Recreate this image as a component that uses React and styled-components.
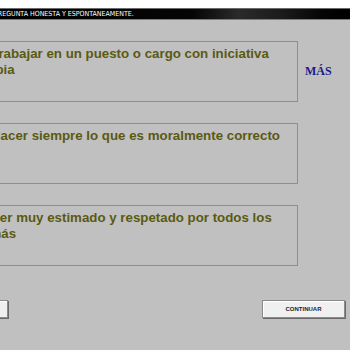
import React from "react";
import styled, { createGlobalStyle } from "styled-components";

const Global = createGlobalStyle`
  html, body {
    margin: 0;
    padding: 0;
    background: #c0c0c0;
    overflow: hidden;
  }
`;

const opciones = [
  { texto: "Trabajar en un puesto o cargo con iniciativa propia", mas: true },
  { texto: "Hacer siempre lo que es moralmente correcto" },
  { texto: "Ser muy estimado y respetado por todos los demás" },
];

export default function App() {
  return (
    <>
      <Global />
      <Pagina>
        <FranjaBlanca />
        <BarraTitulo>
          <Titulo>PREGUNTA HONESTA Y ESPONTANEAMENTE.</Titulo>
        </BarraTitulo>
        <Lista>
          {opciones.map((op) => (
            <Fila key={op.texto}>
              <Caja>
                <Texto>{op.texto}</Texto>
              </Caja>
              {op.mas && <Mas>MÁS</Mas>}
            </Fila>
          ))}
        </Lista>
        <Botonera>
          <Boton className="izq" />
          <Boton>CONTINUAR</Boton>
        </Botonera>
      </Pagina>
    </>
  );
}

const Pagina = styled.div`
  width: 350px;
  height: 350px;
  background: #c0c0c0;
  overflow: hidden;
  display: flex;
  flex-direction: column;
`;
const FranjaBlanca = styled.div`
  height: 8px;
  background: #ffffff;
`;
const BarraTitulo = styled.div`
  height: 10px;
  border-top: 1px solid #6a6a6a;
  border-bottom: 1px solid #7a7a7a;
  background: linear-gradient(
    90deg,
    #000 0%,
    #050505 55%,
    #2a2a2a 68%,
    #1c1c1c 80%,
    #050505 92%,
    #000 100%
  );
  display: flex;
  align-items: center;
  overflow: hidden;
`;
const Titulo = styled.span`
  margin-left: -6px;
  white-space: nowrap;
  color: #ffffff;
  font-family: "DejaVu Sans Condensed", "DejaVu Sans", sans-serif;
  font-size: 7px;
  line-height: 10px;
`;
const Lista = styled.div`
  margin-top: 21px;
  display: flex;
  flex-direction: column;
  gap: 21px;
`;
const Fila = styled.div`
  display: flex;
  align-items: center;
  gap: 7px;
`;
const Caja = styled.div`
  margin-left: -34px;
  width: 332px;
  height: 61px;
  flex-shrink: 0;
  box-sizing: border-box;
  border: 1px solid #8e8e8e;
  padding: 4px 6px 0 7px;
`;
const Texto = styled.p`
  margin: 0;
  text-indent: 17px;
  font-family: "Liberation Sans", Arial, sans-serif;
  font-weight: bold;
  font-size: 13.3px;
  line-height: 16px;
  color: #5a5a12;
`;
const Mas = styled.span`
  font-family: "Liberation Serif", "Times New Roman", serif;
  font-weight: bold;
  font-size: 12px;
  color: #1a1a8c;
`;
const Botonera = styled.div`
  margin-top: 34px;
  display: flex;
  justify-content: space-between;
  padding-right: 5px;
`;
const Boton = styled.button`
  width: 83px;
  height: 18px;
  padding: 0;
  background: #f0f0f0;
  border: 1px solid #8a8a8a;
  box-shadow: inset 1px 1px 0 #ffffff, 1px 1px 0 #6a6a6a;
  font-family: "Liberation Sans", Arial, sans-serif;
  font-weight: bold;
  font-size: 6px;
  color: #222;
  &.izq {
    margin-left: -75px;
  }
`;
